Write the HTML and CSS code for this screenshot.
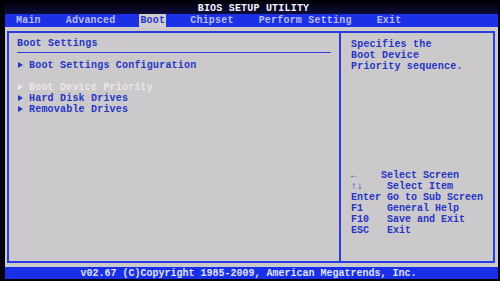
FILE: index.html
```html
<!DOCTYPE html>
<html lang="en">

<head>
    <meta charset="UTF-8">
    <meta name="viewport" content="width=device-width, initial-scale=1.0">
    <title>BIOS Setup Utility</title>
    <link rel="stylesheet" href="styles.css">
</head>

<body>
    <div class="screen">
        <div class="title-bar">BIOS SETUP UTILITY</div>

        <div class="menu-bar">
            <span class="tab">Main</span>
            <span class="tab">Advanced</span>
            <span class="tab active">Boot</span>
            <span class="tab">Chipset</span>
            <span class="tab">Perform Setting</span>
            <span class="tab">Exit</span>
        </div>

        <div class="main">
            <div class="frame">
                <div class="left-pane">
                    <div class="pane-title">Boot Settings</div>
                    <div class="item-group">
                        <div class="item"><span class="arrow"></span>Boot Settings Configuration</div>
                    </div>
                    <div class="item-group">
                        <div class="item selected"><span class="arrow"></span>Boot Device Priority</div>
                        <div class="item"><span class="arrow"></span>Hard Disk Drives</div>
                        <div class="item"><span class="arrow"></span>Removable Drives</div>
                    </div>
                </div>

                <div class="right-pane">
                    <div class="help-text">
                        Specifies the<br>
                        Boot Device<br>
                        Priority sequence.
                    </div>

                    <div class="legend">
                        <div class="legend-row"><span class="key short">&larr;</span>Select Screen</div>
                        <div class="legend-row"><span class="key">&uarr;&darr;</span>Select Item</div>
                        <div class="legend-row"><span class="key">Enter</span>Go to Sub Screen</div>
                        <div class="legend-row"><span class="key">F1</span>General Help</div>
                        <div class="legend-row"><span class="key">F10</span>Save and Exit</div>
                        <div class="legend-row"><span class="key">ESC</span>Exit</div>
                    </div>
                </div>
            </div>
        </div>

        <div class="footer">v02.67 (C)Copyright 1985-2009, American Megatrends, Inc.</div>
    </div>
</body>

</html>
```

FILE: styles.css
```css
body {
    margin: 0;
    width: 500px;
    height: 281px;
    background-color: #020208;
    font-family: "Liberation Mono", "DejaVu Sans Mono", monospace;
    font-weight: bold;
    font-size: 10px;
    line-height: 11px;
    letter-spacing: 0.2px;
    overflow: hidden;
}

.screen {
    margin-left: 5px;
    width: 493px;
}

.title-bar {
    height: 14px;
    box-sizing: border-box;
    padding-top: 3px;
    padding-left: 4px;
    text-align: center;
    color: #f4f4ff;
    background: linear-gradient(#010104, #0c0c3a);
}

.menu-bar {
    height: 13px;
    display: flex;
    align-items: stretch;
    gap: 23px;
    padding-left: 10px;
    background-color: #1c30e6;
}

.tab {
    padding: 1px 1px 0 1px;
    color: #b8bcf0;
}

.tab.active {
    background-color: #cfcdd2;
    color: #2a38c8;
}

.main {
    height: 240px;
    box-sizing: border-box;
    padding: 4px 3px 4px 2px;
    background-color: #cbc9cb;
}

.frame {
    height: 100%;
    box-sizing: border-box;
    border: 2px solid #2d3cdc;
    display: grid;
    grid-template-columns: 332px 1fr;
}

.left-pane {
    border-right: 2px solid #2d3cdc;
    padding: 5px 8px 0 8px;
    color: #2535c6;
}

.pane-title {
    padding-bottom: 3px;
    border-bottom: 1px solid #3142dc;
    margin-bottom: 7px;
}

.item-group {
    margin-bottom: 11px;
}

.item {
    display: flex;
    align-items: center;
}

.item.selected {
    color: #ece6e6;
}

.arrow {
    width: 12px;
    height: 11px;
    position: relative;
}

.arrow::before {
    content: "";
    position: absolute;
    left: 1px;
    top: 2px;
    border-left: 5px solid currentColor;
    border-top: 3px solid transparent;
    border-bottom: 3px solid transparent;
}

.right-pane {
    display: flex;
    flex-direction: column;
    padding: 6px 4px 25px 10px;
    color: #2535c6;
}

.legend {
    margin-top: auto;
    letter-spacing: 0;
}

.legend-row {
    display: flex;
    white-space: pre;
}

.key {
    width: 36px;
    flex-shrink: 0;
}

.key.short {
    width: 30px;
}

.footer {
    height: 12px;
    box-sizing: border-box;
    padding-top: 1px;
    padding-right: 6px;
    text-align: center;
    letter-spacing: 0;
    color: #dfe0f6;
    background-color: #1a30e8;
}
```
